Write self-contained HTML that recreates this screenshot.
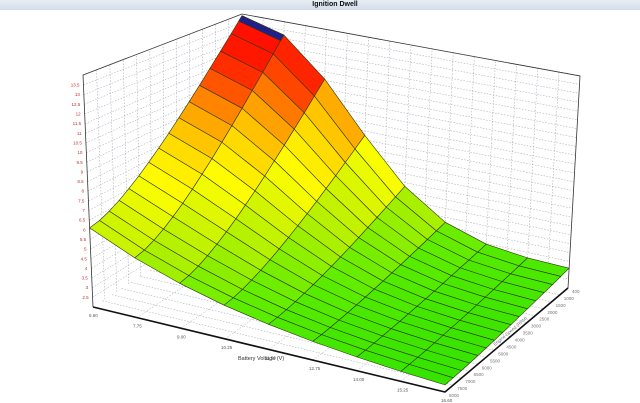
<!DOCTYPE html>
<html><head><meta charset="utf-8"><style>
html,body{margin:0;padding:0;background:#fff;width:640px;height:403px;overflow:hidden;font-family:"Liberation Sans",sans-serif}
#t{position:absolute;left:0;top:0;width:640px;height:10px;background:linear-gradient(#e8eef5,#d3dde9);font-size:7px;font-weight:bold;text-align:center;line-height:10px;color:#111;text-indent:30px}
svg{position:absolute;left:0;top:0}
text{font-family:"Liberation Sans",sans-serif}
</style></head><body>
<div id="t">Ignition Dwell</div>
<svg id="s" width="640" height="403" viewBox="0 0 640 403">
<g id="walls" stroke="#9aa0aa" stroke-width="0.5" stroke-dasharray="1.5,1.5" fill="none"></g>
<g id="frame" stroke="#333" stroke-width="0.8" fill="none">
<polyline points="93,307 83,75 242,14 580,76 568,288"/>
</g>
<g id="surf" stroke="#2c3a0c" stroke-width="0.6" stroke-linejoin="round"></g>
<g stroke="#111" stroke-width="1.6" fill="none"><polyline points="93,307 445,392 568,288"/></g>
<g id="lab" font-size="4.5" fill="#555"></g>
<text x="238" y="360" font-size="5.5" fill="#333">Battery Voltage (V)</text>
<text x="0" y="0" font-size="4.5" fill="#777" transform="translate(495,346) rotate(-40)">Engine Speed (RPM)</text>
</svg>
<script>
var FL=[93,307],FR=[445,392],BR=[568,288],BL=[236,215];
function bl(a,b,c,d,u,w){return a*(1-u)*(1-w)+b*u*(1-w)+c*u*w+d*(1-u)*w;}
function P(u,w,z){var h=z-2;
 var s=bl(19.3,19.5,17.7,16.75,u,w), ln=bl(-0.043,0.0,0.057,0.03,u,w);
 var x=bl(FL[0],FR[0],BR[0],BL[0],u,w), y=bl(FL[1],FR[1],BR[1],BL[1],u,w);
 var dy=s*h; return [x+ln*dy,y-dy];}
function Z(u,w){var g=3.1+10.8*Math.exp(-Math.pow(u/0.43,2.2));var f=1.9+4.2*Math.exp(-2.2*u);var t=Math.pow(w,1.6);return f*(1-t)+g*t;}
var stops=[[2,[40,224,0]],[3.5,[90,236,0]],[5,[175,240,0]],[6,[215,245,0]],[7,[255,255,0]],[8,[255,230,0]],[9,[255,190,0]],[10,[255,140,0]],[11,[255,70,0]],[12,[255,25,0]],[14,[255,10,0]]];
function col(z){for(var i=1;i<stops.length;i++){if(z<=stops[i][0]){var a=stops[i-1],b=stops[i],t=(z-a[0])/(b[0]-a[0]);return "rgb("+[0,1,2].map(function(j){return Math.round(a[1][j]+(b[1][j]-a[1][j])*t)}).join(",")+")";}}return "rgb(255,10,0)";}
var ns="http://www.w3.org/2000/svg";
function el(g,t,at){var e=document.createElementNS(ns,t);for(var k in at)e.setAttribute(k,at[k]);g.appendChild(e);return e;}
var W=document.getElementById("walls");
for(var v=2.5;v<=14.01;v+=0.5){var a=P(0,0,v),b=P(0,1,v),c=P(1,1,v);el(W,"polyline",{points:a+" "+b+" "+c});}
for(var i=1;i<12;i++){var w=i/12,a=P(0,w,2),b=P(0,w,14);el(W,"line",{x1:a[0],y1:a[1],x2:b[0],y2:b[1]});}
for(var i=1;i<16;i++){var u=i/16,a=P(u,1,2),b=P(u,1,14);el(W,"line",{x1:a[0],y1:a[1],x2:b[0],y2:b[1]});}
for(var i=1;i<8;i++){var u=i/8,a=P(u,0,2),b=P(u,1,2);el(W,"line",{x1:a[0],y1:a[1],x2:b[0],y2:b[1]});}
for(var i=1;i<15;i++){var w=i/15,a=P(0,w,2),b=P(1,w,2);el(W,"line",{x1:a[0],y1:a[1],x2:b[0],y2:b[1]});}
var NU=8,NW=15,q=[];
for(var i=0;i<NU;i++)for(var j=0;j<NW;j++){var u0=i/NU,u1=(i+1)/NU,w0=j/NW,w1=(j+1)/NW;
 var zs=[Z(u0,w0),Z(u1,w0),Z(u1,w1),Z(u0,w1)];
 var pts=[P(u0,w0,zs[0]),P(u1,w0,zs[1]),P(u1,w1,zs[2]),P(u0,w1,zs[3])];
 q.push({d:(w0+w1)/2-(u0+u1)/2,pts:pts,z:(zs[0]+zs[1]+zs[2]+zs[3])/4});}
q.sort(function(a,b){return b.d-a.d});
var S=document.getElementById("surf");
function pp(a){return a.map(function(p){return p[0].toFixed(1)+","+p[1].toFixed(1)}).join(" ");}
q.forEach(function(o){el(S,"polygon",{points:pp(o.pts),fill:col(o.z)});});
var b1=[P(0,1,Z(0,1)),P(0.125,1,Z(0.125,1)),P(0.125,0.98,Z(0.125,0.98)),P(0,0.98,Z(0,0.98))];
el(S,"polygon",{points:pp(b1),fill:"#20208a"});
var L=document.getElementById("lab");
for(var v=2.5;v<=13.51;v+=0.5){var p=P(0,0,v);var t=el(L,"text",{x:p[0]-4,y:p[1]+1.5,"text-anchor":"end",fill:"#c03030"});t.textContent=(v%1==0?v.toFixed(0):v.toFixed(1));}
var vl=["6.60","7.75","9.00","10.25","11.50","12.75","14.00","15.25","16.60"];
for(var i=0;i<9;i++){var p=P(i/8,0,2);var t=el(L,"text",{x:p[0]-4,y:p[1]+10});t.textContent=vl[i];}
var rl=["8000","7500","7000","6500","6000","5500","5000","4500","4000","3500","3000","2500","2000","1500","1000","400"];
for(var i=0;i<16;i++){var p=P(1,i/15,2);var t=el(L,"text",{x:p[0]+4,y:p[1]+5,fill:"#777"});t.textContent=rl[i];}
</script>
</body></html>
